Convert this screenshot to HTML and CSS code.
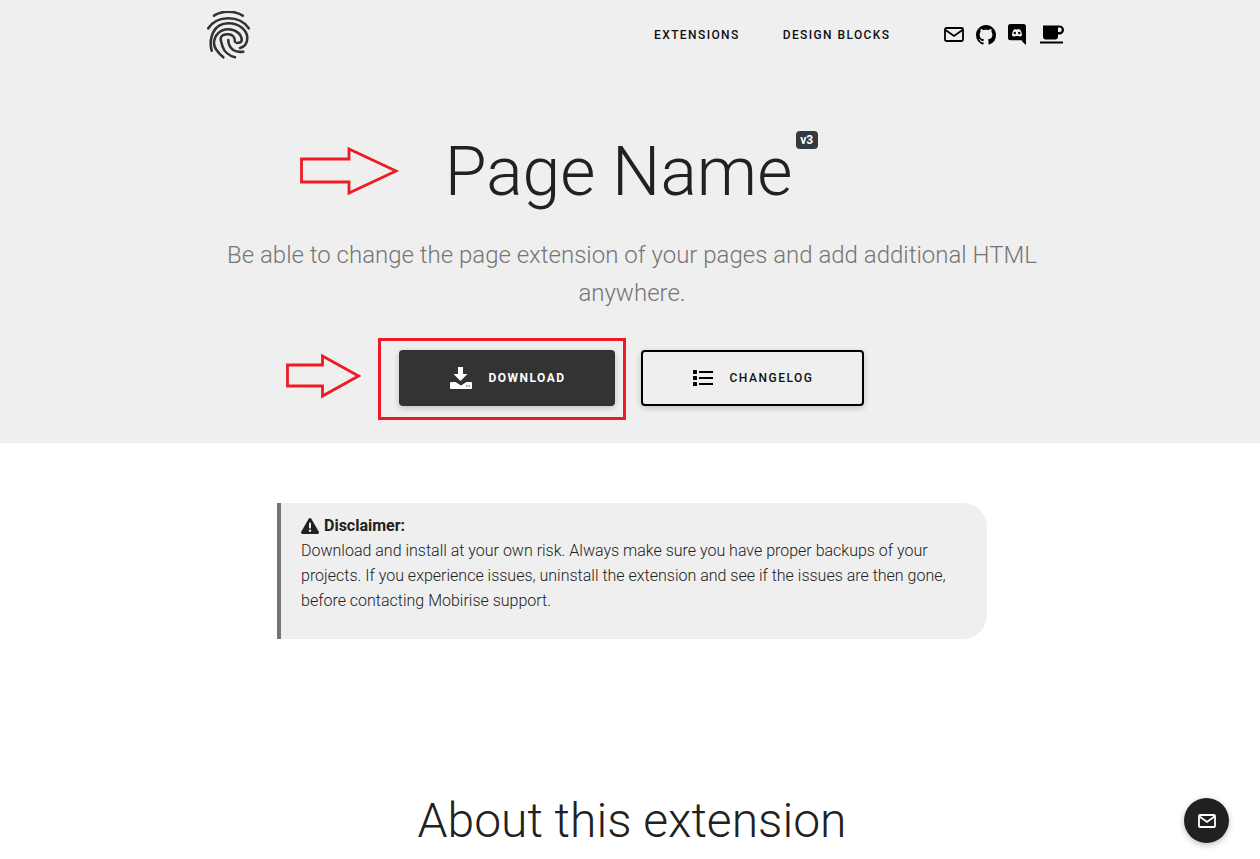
FILE: index.html
```html
<!DOCTYPE html>
<html lang="en">
<head>
<meta charset="utf-8">
<title>Page Name</title>
<link rel="stylesheet" href="styles.css">
</head>
<body>
<section class="hero">
  <nav class="nav">
    <a class="logo" href="#" aria-label="Home">
      <svg width="44" height="48" viewBox="0 0 44 48" fill="none" stroke="#333" stroke-width="2.6" stroke-linecap="round">
        <path d="M7 4.700C11 2 16 .7 21.300.7S31.700 2 35.700 4.700"/>
        <path d="M1.300 17.300C5.500 11 13 7.300 21.300 7.300S37.500 11 41.700 17.300"/>
        <path d="M4.700 39.700C1.500 28 6 12.300 21.300 12.300c11 0 19 7 19 15 0 5-3 8.700-7.300 9.700"/>
        <path d="M16.300 46.300C10 41 7 37 7 32.300 7 24.500 13 18.300 21.300 18.300c7.500 0 13.400 5 13.400 10.700 0 2-1.700 3-5 3"/>
        <path d="M28 46.300c-6-1.500-11-6-12.500-11-1.200-3.500-2-5.500-1.800-8 .4-3 3.500-4 7.600-4 4 0 6.700 3 6.700 7.400"/>
        <path d="M36.300 40.700c-4 .5-7.500 0-10-1.700-3.500-2.500-5-6-5-10"/>
      </svg>
    </a>
    <div class="nav-links">
      <a href="#">EXTENSIONS</a>
      <a href="#">DESIGN BLOCKS</a>
    </div>
    <div class="nav-icons">
      <svg width="20" height="15" viewBox="0 0 20 15" fill="none" stroke="#000" stroke-width="1.800"><rect x="1" y="1" width="18" height="13" rx="1.500"/><path d="M1.500 3 10 9l8.500-6"/></svg>
      <svg width="20" height="20" viewBox="0 0 16 16" fill="#000"><path d="M8 0C3.580 0 0 3.580 0 8c0 3.540 2.290 6.530 5.470 7.590.4.070.55-.17.550-.38 0-.19-.010-.82-.010-1.490-2.010.370-2.530-.490-2.690-.940-.090-.230-.480-.940-.820-1.130-.280-.150-.680-.520-.010-.530.630-.010 1.080.580 1.230.820.720 1.210 1.870.870 2.330.660.070-.520.280-.870.510-1.070-1.780-.200-3.640-.890-3.640-3.950 0-.870.310-1.590.820-2.150-.080-.200-.360-1.020.080-2.120 0 0 .670-.210 2.200.820.640-.180 1.320-.270 2-.270s1.360.090 2 .270c1.530-1.040 2.200-.820 2.200-.820.440 1.100.160 1.920.080 2.120.510.560.820 1.270.820 2.150 0 3.070-1.870 3.750-3.650 3.950.290.250.540.730.540 1.480 0 1.070-.010 1.930-.010 2.200 0 .210.150.460.550.380A8.010 8.010 0 0 0 16 8c0-4.420-3.580-8-8-8z"/></svg>
      <svg width="18" height="21" viewBox="0 0 18 21"><path fill="#000" d="M2.500 0h13A2.500 2.500 0 0 1 18 2.500V21l-2.500-2.200-1.300-1.300-.4-1.300H2.500A2.500 2.500 0 0 1 0 13.700V2.500A2.500 2.500 0 0 1 2.500 0z"/><path fill="#efefef" d="M4 11.500c.1-2.500.8-4.500 1.500-5.500 1-.8 2-.9 2-.9l.3.5c2.400-.3 2.400-.3 2.400-.3l.3-.2s1 .1 2 .9c.7 1 1.400 3 1.500 5.500-1 1-2.500 1.300-2.500 1.300l-.6-.9H7l-.5.9s-1.500-.3-2.500-1.300z"/><circle cx="6.800" cy="9" r="1.200" fill="#000"/><circle cx="11.200" cy="9" r="1.200" fill="#000"/></svg>
      <svg class="cup" width="25" height="19" viewBox="0 0 25 19"><path fill="#000" d="M3 .5h16.500a4.500 4.500 0 0 1 0 9H18v2a3 3 0 0 1-3 3H6a3 3 0 0 1-3-3z"/><path fill="#efefef" d="M18 2.500h1.500a2 2 0 0 1 0 4.500H18z"/><rect y="16.500" width="23" height="2" fill="#000"/></svg>
    </div>
  </nav>
  <div class="title-row">
    <h1 class="title">Page Name<span class="version">v3</span></h1>
  </div>
  <p class="lead">Be able to change the page extension of your pages and add additional HTML anywhere.</p>
  <div class="actions">
    <a class="btn btn-dark" href="#">
      <svg width="22" height="22" viewBox="0 0 22 22" fill="#fff"><path d="M8 0h5v7h4.500l-7 7-7-7H8z"/><path fill-rule="evenodd" d="M1 15h4.500l5.500 3.500 5.500-3.500H21a1 1 0 0 1 1 1v5a1 1 0 0 1-1 1H1a1 1 0 0 1-1-1v-5a1 1 0 0 1 1-1zm15 3.500h1.400v1H16zm2.500 0h1.400v1h-1.400z"/></svg>
      <span>DOWNLOAD</span>
    </a>
    <a class="btn btn-outline" href="#">
      <svg width="20" height="16" viewBox="0 0 20 16" fill="#000"><rect width="4" height="4" rx=".6"/><rect y="6" width="4" height="4" rx=".6"/><rect y="12" width="4" height="4" rx=".6"/><rect x="6" y="1" width="14" height="2"/><rect x="6" y="7" width="14" height="2"/><rect x="6" y="13" width="14" height="2"/></svg>
      <span>CHANGELOG</span>
    </a>
  </div>
</section>

<section class="content">
  <aside class="disclaimer">
    <div class="disclaimer-head">
      <svg width="18" height="16" viewBox="0 0 18 16"><path fill="#212121" d="M7.700.8a1.500 1.500 0 0 1 2.600 0l7.500 13a1.500 1.500 0 0 1-1.300 2.200H1.500a1.500 1.500 0 0 1-1.300-2.200z"/><rect x="8" y="4.500" width="2" height="6" rx=".8" fill="#efefef"/><circle cx="9" cy="12.800" r="1.200" fill="#efefef"/></svg>
      <strong>Disclaimer:</strong>
    </div>
    <p>Download and install at your own risk. Always make sure you have proper backups of your projects. If you experience issues, uninstall the extension and see if the issues are then gone, before contacting Mobirise support.</p>
  </aside>
  <h2 class="about">About this extension</h2>
</section>

<a class="float-btn" href="#" aria-label="Contact">
  <svg width="18" height="14" viewBox="0 0 18 14" fill="none" stroke="#fff" stroke-width="1.800"><rect x="1" y="1" width="16" height="12" rx="1"/><path d="M1.500 2.500 9 8l7.500-5.500"/></svg>
</a>

<svg class="arrow arrow-title" width="100" height="50" viewBox="0 0 100 50" fill="none" stroke="#ed1c24" stroke-width="2.800"><path d="M1.500 12H49V2l47 22-47 22V35H1.500z"/></svg>
<svg class="arrow arrow-btn" width="76" height="46" viewBox="0 0 76 46" fill="none" stroke="#ed1c24" stroke-width="2.800"><path d="M2.500 11h35V2l36 20-36 20V32h-35z"/></svg>
<div class="red-box"></div>
</body>
</html>
```

FILE: styles.css
```css
* { box-sizing: border-box; }
html, body { margin: 0; height: 100%; overflow: hidden; }
body {
  position: relative;
  font-family: Roboto, "Liberation Sans", sans-serif;
  color: #212121;
  background: #fff;
}
a { color: inherit; text-decoration: none; }

.hero {
  height: 443px;
  background: #efefef;
  display: flex;
  flex-direction: column;
  align-items: center;
}
.nav {
  width: 858px;
  height: 70px;
  margin-left: 12px;
  display: flex;
  align-items: flex-start;
  padding-top: 11px;
}
.logo { display: block; width: 44px; height: 48px; flex: none; }
.nav-links {
  display: flex;
  flex: none;
  gap: 43px;
  margin-left: 403px;
  padding-top: 17px;
  font-size: 12px;
  font-weight: 500;
  letter-spacing: 1.400px;
  line-height: 15px;
  white-space: nowrap;
  color: #111;
}
.nav-icons {
  display: flex;
  flex: none;
  align-items: center;
  gap: 12px;
  margin-left: 54px;
  padding-top: 13px;
}
.cup { margin-left: 2px; }
.title-row { margin-top: 59px; margin-left: -23px; }
.title {
  position: relative;
  margin: 0;
  font-size: 68px;
  line-height: 86px;
  font-weight: 300;
  color: #212121;
}
.version {
  position: absolute;
  left: 351px;
  top: 2px;
  width: 22px;
  height: 18px;
  border-radius: 4px;
  background: #343a40;
  color: #fff;
  font-size: 12px;
  font-weight: 700;
  line-height: 18px;
  text-align: center;
}
.lead {
  width: 840px;
  margin: 21px 0 0 4px;
  text-align: center;
  font-size: 24px;
  line-height: 38px;
  font-weight: 300;
  color: #757575;
}
.actions {
  display: flex;
  gap: 26px;
  margin-top: 38px;
  margin-left: 3px;
}
.btn {
  width: 216px;
  height: 56px;
  padding-left: 2px;
  border-radius: 4px;
  display: flex;
  align-items: center;
  justify-content: center;
  gap: 16px;
  font-size: 12px;
  letter-spacing: 1.500px;
  font-weight: 700;
  box-shadow: 0 2px 6px rgba(0, 0, 0, .2);
}
.btn-dark { background: #333; color: #fff; }
.btn-outline {
  width: 223px;
  padding-left: 1px;
  gap: 17px;
  border: 2px solid #000;
  color: #111;
  font-weight: 500;
  background: #efefef;
}
.content {
  display: flex;
  flex-direction: column;
  align-items: center;
  padding-left: 4px;
}
.disclaimer {
  width: 710px;
  height: 136px;
  margin-top: 60px;
  padding: 12px 30px 0 20px;
  border-left: 4px solid #757575;
  border-radius: 0 24px 24px 0;
  background: #efefef;
  font-size: 16px;
  line-height: 25px;
  color: #212121;
}
.disclaimer-head { display: flex; align-items: center; gap: 5px; height: 21px; margin-bottom: 2px; }
.disclaimer-head strong { font-weight: 700; }
.disclaimer p { margin: 0; font-weight: 300; }
.about {
  margin: 152px 0 0;
  font-size: 48px;
  line-height: 60px;
  font-weight: 300;
  color: #212121;
}
.float-btn {
  position: fixed;
  left: 1184px;
  top: 798px;
  width: 45px;
  height: 45px;
  border-radius: 50%;
  background: #212121;
  display: flex;
  align-items: center;
  justify-content: center;
  box-shadow: 0 2px 6px rgba(0, 0, 0, .25);
}
.arrow { position: absolute; }
.arrow-title { left: 300px; top: 147px; }
.arrow-btn { left: 285px; top: 354px; }
.red-box {
  position: absolute;
  left: 378px;
  top: 338px;
  width: 248px;
  height: 82px;
  border: 3px solid #ed1c24;
}
```
